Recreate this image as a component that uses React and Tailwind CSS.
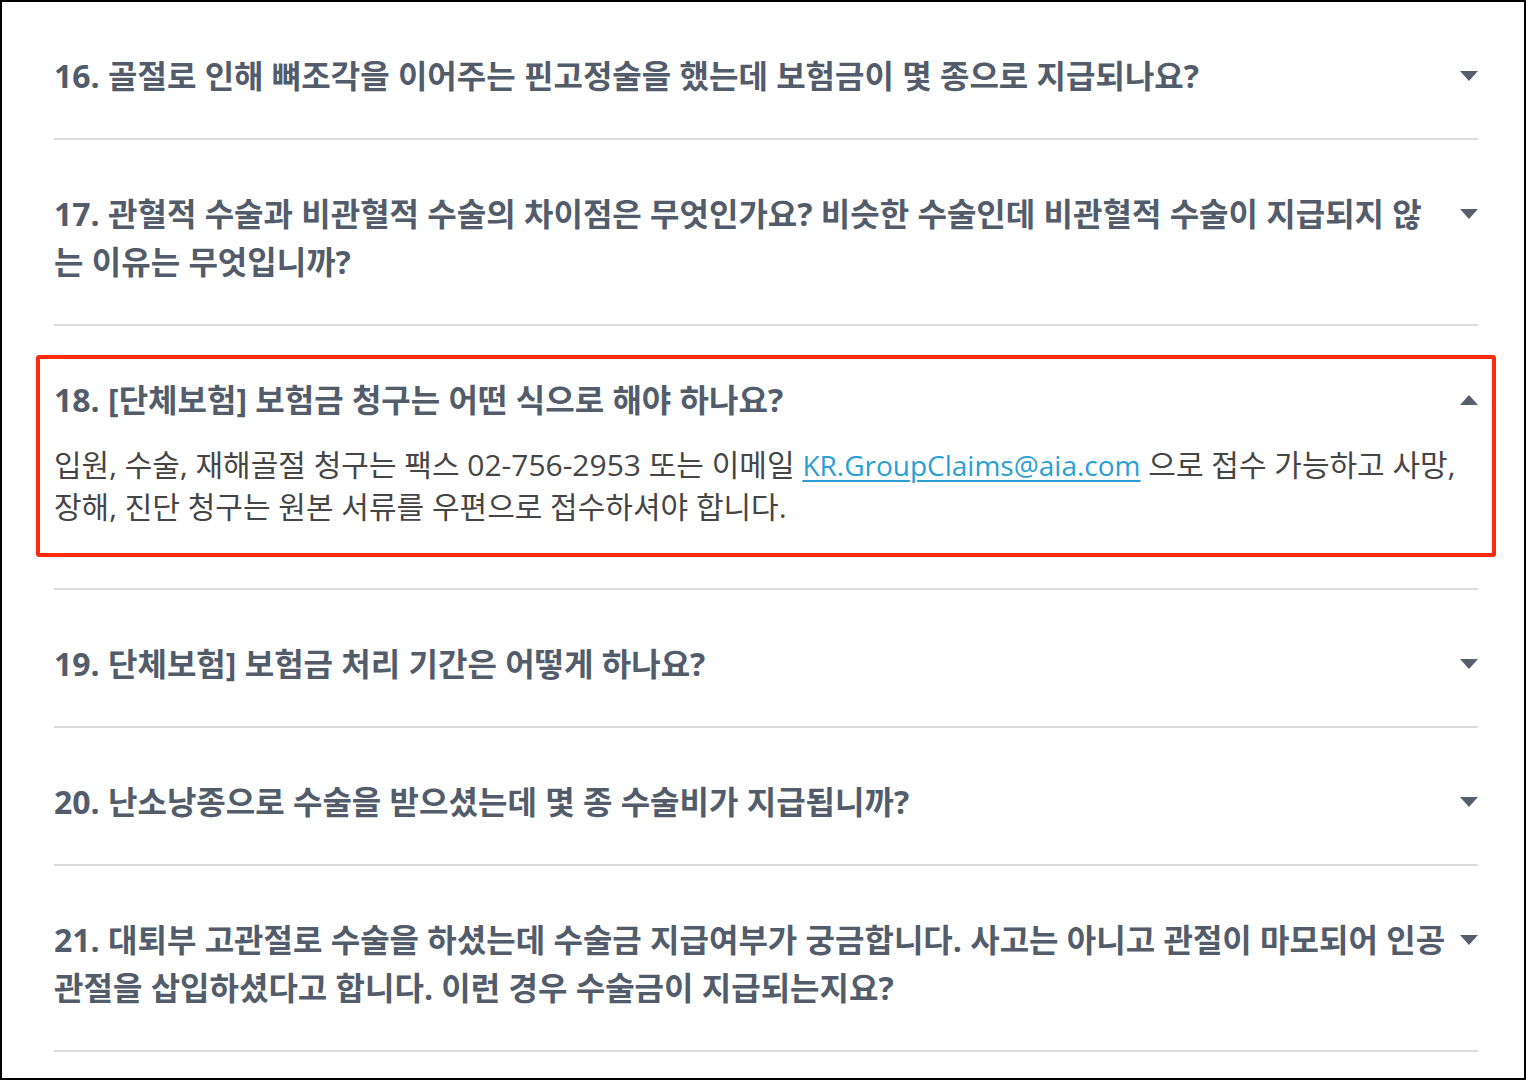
const faqs = [
  { no: 16, q: '골절로 인해 뼈조각을 이어주는 핀고정술을 했는데 보험금이 몇 종으로 지급되나요?' },
  { no: 17, q: '관혈적 수술과 비관혈적 수술의 차이점은 무엇인가요? 비슷한 수술인데 비관혈적 수술이 지급되지 않는 이유는 무엇입니까?' },
  { no: 18, q: '[단체보험] 보험금 청구는 어떤 식으로 해야 하나요?', open: true, highlight: true },
  { no: 19, q: '단체보험] 보험금 처리 기간은 어떻게 하나요?' },
  { no: 20, q: '난소낭종으로 수술을 받으셨는데 몇 종 수술비가 지급됩니까?' },
  { no: 21, q: '대퇴부 고관절로 수술을 하셨는데 수술금 지급여부가 궁금합니다. 사고는 아니고 관절이 마모되어 인공관절을 삽입하셨다고 합니다. 이런 경우 수술금이 지급되는지요?' },
];

function Caret({ up }) {
  return (
    <svg width="18" height="10" viewBox="0 0 18 10" className="shrink-0 mt-[19px]">
      <polygon points={up ? '0,10 18,10 9,0' : '0,0 18,0 9,10'} fill="#56606c" />
    </svg>
  );
}

function FaqItem({ item }) {
  return (
    <div className="relative border-b-2 border-[#dcdcdc] pt-[50px] pb-[38px]">
      {item.highlight && (
        <div className="pointer-events-none absolute top-[29px] bottom-[31px] -left-[18px] -right-[18px] rounded-[3px] border-4 border-[#ff2a0a]" />
      )}
      <div className="flex items-start gap-[14px]">
        <h3 className="flex-1 text-[32px] font-bold leading-[48px] text-[#525c6b]">
          {item.no}. {item.q}
        </h3>
        <Caret up={item.open} />
      </div>
      {item.open && (
        <p className="mt-[20px] mb-[22px] pr-[14px] text-[30px] leading-[42px] text-[#454545]">
          입원, 수술, 재해골절 청구는 팩스 02-756-2953 또는 이메일{' '}
          <a href="#" className="text-[28px] text-[#2a9fd4] underline underline-offset-[4px]">KR.GroupClaims@aia.com</a>{' '}
          으로 접수 가능하고 사망, 장해, 진단 청구는 원본 서류를 우편으로 접수하셔야 합니다.
        </p>
      )}
    </div>
  );
}

export default function App() {
  return (
    <div
      className="h-[1080px] w-[1526px] overflow-hidden border-2 border-black bg-white"
      style={{ fontFamily: '"Open Sans", "Noto Sans CJK KR", sans-serif' }}
    >
      <div className="-mt-[2px] ml-[52px] mr-[46px] border-t-2 border-[#dcdcdc]">
        {faqs.map((item) => (
          <FaqItem key={item.no} item={item} />
        ))}
      </div>
    </div>
  );
}
